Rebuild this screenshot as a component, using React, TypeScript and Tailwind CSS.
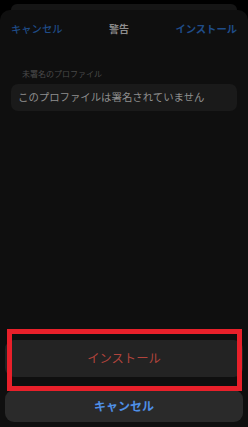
import React from "react";

export default function App() {
  const font = { fontFamily: '"Noto Sans CJK JP", "Noto Sans", sans-serif' };
  return (
    <div
      className="relative w-[248px] h-[427px] bg-black overflow-hidden flex flex-col"
      style={font}
    >
      <div className="mx-[11px] mt-[4px] h-[6px] rounded-t-[10px] bg-[#151515]" />
      <div className="flex-1 rounded-t-[10px] bg-[#0f0f0f] flex flex-col">
        <div className="h-[38px] px-[11px] flex items-center justify-between">
          <span className="text-[10.3px] leading-none text-[#1f4c88] font-medium">キャンセル</span>
          <span className="text-[10px] leading-none text-[#8d8d8d] font-bold">警告</span>
          <span className="text-[10.3px] leading-none text-[#1f4c88] font-bold">インストール</span>
        </div>
        <div className="pl-[22px] mt-[22px] text-[8px] leading-none text-[#4a4a4a]">
          未署名のプロファイル
        </div>
        <div className="mx-[11px] mt-[6px] h-[27px] rounded-[7px] bg-[#1a1a1a] flex items-center px-[7px]">
          <span className="text-[10.4px] leading-none text-[#8f8f8f]">
            このプロファイルは署名されていません
          </span>
        </div>
        <div className="flex-1" />
        <div className="px-[5px] pb-[5px] flex flex-col">
          <div className="h-[37px] rounded-[9px] bg-[#232323] flex items-center justify-center">
            <span className="text-[12.3px] leading-none text-[#b2443c]">インストール</span>
          </div>
          <div className="mt-[13px] h-[32px] rounded-[9px] bg-[#2a2a2a] flex items-center justify-center">
            <span className="text-[12px] leading-none text-[#4f8fe6] font-bold">キャンセル</span>
          </div>
        </div>
      </div>
      <div className="absolute left-[7px] top-[329px] w-[235px] h-[62px] border-[5px] border-[#e8202a]" />
    </div>
  );
}
